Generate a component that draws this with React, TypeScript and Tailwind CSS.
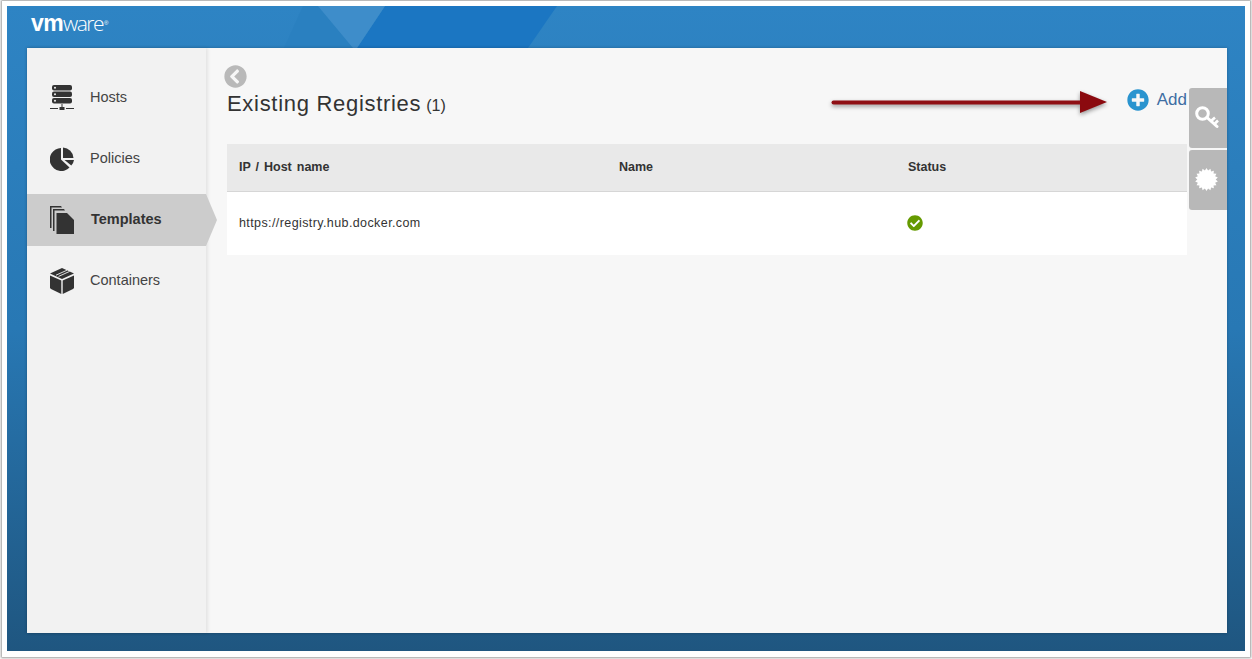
import { type ReactNode } from "react";
import { FaCheckCircle, FaChevronCircleLeft, FaPlusCircle } from "react-icons/fa";

// ---- Sidebar icons ----
function HostsIcon() {
  return (
    <svg width="24" height="26" viewBox="0 0 24 26" fill="#333333">
      <rect x="2" y="0" width="20" height="5.5" rx="2" />
      <rect x="2" y="6.5" width="20" height="5.5" rx="2" />
      <rect x="2" y="13" width="20" height="5.5" rx="2" />
      <circle cx="5" cy="2.8" r="1" fill="#f2f2f2" />
      <circle cx="5" cy="9.3" r="1" fill="#f2f2f2" />
      <circle cx="5" cy="15.8" r="1" fill="#f2f2f2" />
      <rect x="0" y="23" width="8" height="1" />
      <rect x="16" y="23" width="8" height="1" />
      <rect x="9.5" y="22" width="5" height="3" />
      <rect x="11.5" y="19" width="1" height="3" />
    </svg>
  );
}

function PoliciesIcon() {
  return (
    <svg width="24" height="24" viewBox="0 0 24 24" fill="#333333">
      <path d="M11 1A11.5 11.5 0 1 0 19.5 20.5L11 12.5Z" />
      <path d="M13 0.5A11 11 0 0 1 23.5 11H13Z" />
      <path d="M14.5 13H24A11 11 0 0 1 21.3 18.6Z" />
    </svg>
  );
}

function TemplatesIcon() {
  return (
    <svg width="24" height="28" viewBox="0 0 24 28" fill="#333333">
      <path d="M0 0H11L12 1.5H1.5V22H0Z" />
      <path d="M3 3H14L15 4.5H4.5V25H3Z" />
      <path d="M6.5 7H17L24 14V28H6.5Z" />
    </svg>
  );
}

function ContainersIcon() {
  return (
    <svg width="24" height="26" viewBox="0 0 24 26" fill="#333333">
      <path d="M12 0L24 5.5L12 11L0 5.5Z" />
      <path d="M0 7.5L11.3 12.6V26L1 21L0 20Z" />
      <path d="M24 7.5L12.7 12.6V26L23 21L24 20Z" />
      <path d="M6 7.2L17 2.2M8.6 8.4L19.6 3.4" stroke="#f2f2f2" strokeWidth="0.9" fill="none" />
    </svg>
  );
}

// ---- Side tab icons ----
function KeyIcon() {
  return (
    <svg width="24" height="24" viewBox="0 0 24 24" fill="none" stroke="#ffffff">
      <circle cx="7.5" cy="7.5" r="5.8" strokeWidth="3" />
      <path d="M12 11.5L22 20.5" strokeWidth="3" strokeLinecap="round" />
      <path d="M15.5 15.5L20 11.5M19 18.5L23 14.5" strokeWidth="2.6" />
    </svg>
  );
}

function BurstIcon() {
  const pts: string[] = [];
  for (let i = 0; i < 36; i++) {
    const r = i % 2 === 0 ? 11.5 : 9.2;
    const a = (i * Math.PI) / 18;
    pts.push(`${(11.5 + r * Math.sin(a)).toFixed(2)},${(11.5 - r * Math.cos(a)).toFixed(2)}`);
  }
  return (
    <svg width="23" height="23" viewBox="0 0 23 23" fill="#ffffff">
      <polygon points={pts.join(" ")} />
    </svg>
  );
}

function NavItem({ icon, label, active }: { icon: ReactNode; label: string; active?: boolean }) {
  return (
    <div className={`relative flex h-[52px] items-center pl-[23px] ${active ? "bg-[#cccccc]" : ""}`}>
      <div className="flex w-[24px] justify-center">{icon}</div>
      <span
        className={`text-[14.5px] ${active ? "ml-[17px] font-bold text-[#333333]" : "ml-[16px] text-[#444444]"}`}
      >
        {label}
      </span>
      {active && (
        <span className="absolute left-full top-0 h-full w-[11px] bg-[#cccccc] [clip-path:polygon(0_0,100%_50%,0_100%)]" />
      )}
    </div>
  );
}

export default function App() {
  return (
    <div className="h-[659px] w-[1252px] overflow-hidden bg-white pl-[2px] pt-px font-['Liberation_Sans',Arial,sans-serif]">
      <div className="h-[656px] w-[1248px] bg-white p-[5px] shadow-[0_0_2px_1px_rgba(0,0,0,0.4)]">
        <div className="relative h-[645px] w-[1238px] bg-gradient-to-b from-[#2e84c4] via-[#2878b4] via-50% to-[#1f5680]">
          {/* Banner shapes */}
          <svg className="absolute left-0 top-0" width="1238" height="42" viewBox="0 0 1238 42">
            <polygon points="296,0 311,0 346,42 277,42" fill="#2a80c0" />
            <polygon points="378,0 550,0 521,42 350,42" fill="#1b76c2" />
            <polygon points="311,0 378,0 350,42 346,42" fill="#3e8dca" />
          </svg>

          {/* Logo */}
          <div className="relative flex h-[42px] items-start pl-[24px] pt-[4px] leading-[26px] text-white">
            <span className="text-[23px] font-bold tracking-[-0.6px]">vm</span>
            <span className="font-['Open_Sans',sans-serif] text-[21px] font-light tracking-[-1.5px]">ware</span>
            <span className="ml-[1px] mt-[9px] text-[6px] leading-[8px]">®</span>
          </div>

          {/* Card */}
          <div className="relative ml-[20px] flex h-[585px] w-[1200px] bg-[#f7f7f7] shadow-[0_0_3px_rgba(0,0,0,0.25)]">
            <aside className="relative z-10 flex w-[179px] flex-col gap-[9px] bg-[#f2f2f2] pt-[24px] shadow-[2px_0_3px_rgba(0,0,0,0.08)]">
              <NavItem icon={<HostsIcon />} label="Hosts" />
              <NavItem icon={<PoliciesIcon />} label="Policies" />
              <NavItem icon={<TemplatesIcon />} label="Templates" active />
              <NavItem icon={<ContainersIcon />} label="Containers" />
            </aside>

            <main className="flex-1 pl-[21px] pr-[40px] pt-[17px]">
              <FaChevronCircleLeft className="ml-[-3px] text-[#b9b9b9]" size={23} />
              <div className="flex h-[56px] items-start justify-between">
                <h1 className="flex items-baseline pt-[3px] text-[22px] font-normal leading-[26px] tracking-[0.7px] text-[#333333]">
                  Existing Registries
                  <span className="ml-[5px] text-[16px] tracking-normal">(1)</span>
                </h1>
                <div className="flex items-center gap-[8px]">
                  <FaPlusCircle className="mt-[-1px] text-[#2a94cf]" size={22} />
                  <span className="text-[17px] leading-[24px] text-[#3e6ea3]">Add</span>
                </div>
              </div>

              <table className="w-full table-fixed text-left text-[12.5px] text-[#333333]">
                <thead>
                  <tr className="h-[47px] border-b border-[#d6d6d6] bg-[#e9e9e9]">
                    <th className="w-[380px] px-[12px] font-bold [word-spacing:1.5px]">IP / Host name</th>
                    <th className="w-[289px] px-[12px] font-bold">Name</th>
                    <th className="px-[12px] font-bold">Status</th>
                  </tr>
                </thead>
                <tbody>
                  <tr className="h-[64px] bg-white">
                    <td className="px-[12px] tracking-[0.4px]">https://registry.hub.docker.com</td>
                    <td className="px-[12px]" />
                    <td className="px-[12px]">
                      <FaCheckCircle className="ml-[-1px] text-[#659a00]" size={16} />
                    </td>
                  </tr>
                </tbody>
              </table>
            </main>

            {/* Side tabs */}
            <div className="absolute right-0 top-[40px] flex flex-col gap-[2px]">
              <div className="flex h-[60px] w-[38px] items-center justify-center rounded-l-[3px] bg-[#b8b8b8] pr-[3px]">
                <KeyIcon />
              </div>
              <div className="flex h-[60px] w-[38px] items-center justify-center rounded-l-[3px] bg-[#b8b8b8] pb-[2px] pr-[3px]">
                <BurstIcon />
              </div>
            </div>

            {/* Annotation arrow */}
            <svg
              className="absolute left-[800px] top-[38px] [filter:drop-shadow(0_2px_2px_rgba(0,0,0,0.4))]"
              width="285"
              height="36"
              viewBox="0 0 285 36"
            >
              <path d="M6.5 16.5H255" stroke="#8f0f14" strokeWidth="4" strokeLinecap="round" />
              <polygon points="253,5 280,16 253,27" fill="#8b0a0f" />
            </svg>
          </div>
        </div>
      </div>
    </div>
  );
}
